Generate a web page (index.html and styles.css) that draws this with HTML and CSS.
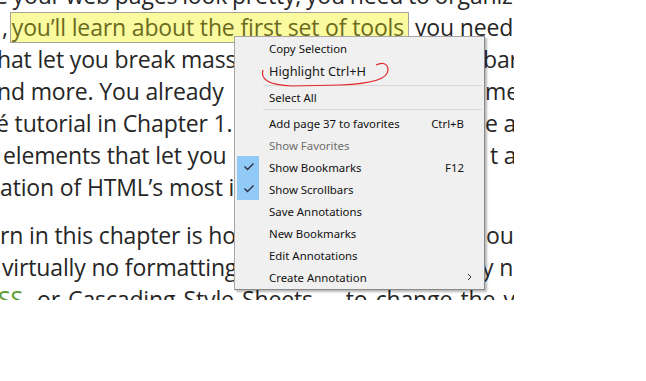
FILE: index.html
```html
<!DOCTYPE html>
<html lang="en">
<head>
<meta charset="utf-8">
<title>Reader</title>
<link rel="stylesheet" href="styles.css">
</head>
<body>
<div class="book">
  <div class="para p1">
    <div class="ln l1">e your web pages look pretty, you need to organize them.</div>
    <div class="ln l2">,<span class="hl">you’ll learn about the first set of tools</span> you need for this task</div>
    <div class="ln split l3"><span>hat let you break massive</span><span class="r r3">bar</span></div>
    <div class="ln split l4"><span>nd more. You already</span><span class="r r4">me</span></div>
    <div class="ln split l5"><span>é tutorial in Chapter 1. I</span><span class="r r5">e a</span></div>
    <div class="ln split l6"><span>elements that let you</span><span class="r r6">t a</span></div>
    <div class="ln l7">ation of HTML’s most important</div>
  </div>
  <div class="para p2">
    <div class="ln split l8"><span>rn in this chapter is how</span><span class="r r8">ou</span></div>
    <div class="ln split l9"><span>virtually no formatting</span><span class="r r9">y no</span></div>
    <div class="ln l10"><span class="green">SS</span>, or Cascading Style Sheets<span class="dash">—</span>to change the visual</div>
  </div>
</div>

<div class="menu">
  <div class="item"><span class="ic"></span><span class="lbl">Copy Selection</span><span class="key"></span><span class="sub"></span></div>
  <div class="item hlrow"><span class="ic"></span><span class="lbl">Highlight Ctrl+H</span><span class="key"></span><span class="sub"></span></div>
  <div class="sep s1"></div>
  <div class="item short"><span class="ic"></span><span class="lbl">Select All</span><span class="key"></span><span class="sub"></span></div>
  <div class="sep s2"></div>
  <div class="item"><span class="ic"></span><span class="lbl">Add page 37 to favorites</span><span class="key">Ctrl+B</span><span class="sub"></span></div>
  <div class="item disabled"><span class="ic"></span><span class="lbl">Show Favorites</span><span class="key"></span><span class="sub"></span></div>
  <div class="item"><span class="ic checked"><svg width="22" height="22" viewBox="0 0 22 22"><path d="M7.5 10.5 L10.5 13.5 L16.5 7.5" fill="none" stroke="#2a2a3a" stroke-width="1.3"/></svg></span><span class="lbl">Show Bookmarks</span><span class="key">F12</span><span class="sub"></span></div>
  <div class="item"><span class="ic checked"><svg width="22" height="22" viewBox="0 0 22 22"><path d="M7.5 10.5 L10.5 13.5 L16.5 7.5" fill="none" stroke="#2a2a3a" stroke-width="1.3"/></svg></span><span class="lbl">Show Scrollbars</span><span class="key"></span><span class="sub"></span></div>
  <div class="item"><span class="ic"></span><span class="lbl">Save Annotations</span><span class="key"></span><span class="sub"></span></div>
  <div class="item"><span class="ic"></span><span class="lbl">New Bookmarks</span><span class="key"></span><span class="sub"></span></div>
  <div class="item"><span class="ic"></span><span class="lbl">Edit Annotations</span><span class="key"></span><span class="sub"></span></div>
  <div class="item"><span class="ic"></span><span class="lbl">Create Annotation</span><span class="key"></span><span class="sub"><svg width="19" height="22" viewBox="0 0 19 22"><path d="M4 8 L7 11 L4 14" fill="none" stroke="#333" stroke-width="1"/></svg></span></div>
</div>

<svg class="scribble" width="646" height="381" viewBox="0 0 646 381">
  <path d="M263 70 C260 79 268 85 292 86 L340 85 C368 84 388 80 388 70 C388 63 382 62 376 65" fill="none" stroke="#e3262a" stroke-width="1.2"/>
</svg>
</body>
</html>
```
FILE: styles.css
```css
html, body {
  margin: 0;
  padding: 0;
}
body {
  width: 646px;
  height: 381px;
  overflow: hidden;
  position: relative;
  background: #ffffff;
  font-family: "Open Sans", "Noto Sans", sans-serif;
}

/* ---------- book page ---------- */
.book {
  width: 514px;
  height: 300px;
  overflow: hidden;
  color: #262626;
  font-size: 23px;
  letter-spacing: -0.15px;
  line-height: 32px;
}
.para {
  white-space: nowrap;
}
.p1 { margin-top: -21px; }
.p2 { margin-top: 16px; }

.ln { height: 32px; }
.split {
  display: grid;
  grid-template-columns: 480px max-content;
}
.l1 { margin-left: -5px; word-spacing: -1px; }
.l2 { margin-left: 2px; }
.l3 { margin-left: -3px; }
.l4 { margin-left: -3px; }
.l5 { margin-left: -4px; }
.l6 { margin-left: 3px; }
.l7 { margin-left: 0; }
.l8 { margin-left: 0; }
.l9 { margin-left: 2px; }
.l10 { margin-left: -2px; word-spacing: 2.4px; }
.dash {
  display: inline-block;
  padding: 0 5px;
}

.r3 { padding-left: 6px; }
.r4 { padding-left: 8px; }
.r5 { padding-left: 9px; }
.r6 { padding-left: 7px; }
.r8 { padding-left: 6px; }
.r9 { padding-left: 0; }

.hl {
  display: inline-block;
  line-height: 29px;
  margin-left: 2px;
  padding: 0 4px 0 1px;
  background: #fafa9f;
  border: 1px solid #a3a39a;
  color: #6a6a1e;
}
.green { color: #5b9b2f; }

/* ---------- context menu ---------- */
.menu {
  position: absolute;
  left: 234px;
  top: 36px;
  width: 246px;
  padding: 0 1px 1px 2px;
  background: #f0f0f0;
  border: 1px solid #a7a7a7;
  border-right-color: #8a8a8a;
  border-bottom-color: #8a8a8a;
  box-shadow: 2px 2px 2px rgba(0, 0, 0, 0.28);
  font-family: "Noto Sans", "Open Sans", sans-serif;
  font-size: 11.4px;
  color: #111;
}
.item {
  display: grid;
  grid-template-columns: 32px 1fr auto 19px;
  align-items: center;
  height: 22px;
  white-space: nowrap;
}
.item.hlrow {
  height: 24px;
  font-size: 12.8px;
  color: #1a1a1a;
}
.item.short { height: 21px; }
.ic {
  width: 22px;
  height: 22px;
  display: block;
}
.ic svg { display: block; }
.ic.checked { background: #91c9f7; }
.key { text-align: right; }
.sub svg { display: block; }
.disabled { color: #6d6d6d; }

.sep {
  height: 1px;
  background: #d7d7d7;
  margin-left: 26px;
  margin-right: 1px;
}
.s1 { margin-top: 2px; margin-bottom: 0; }
.s2 { margin-top: 2px; margin-bottom: 2px; }

/* ---------- annotation overlay ---------- */
.scribble {
  position: absolute;
  left: 0;
  top: 0;
  pointer-events: none;
}
```
